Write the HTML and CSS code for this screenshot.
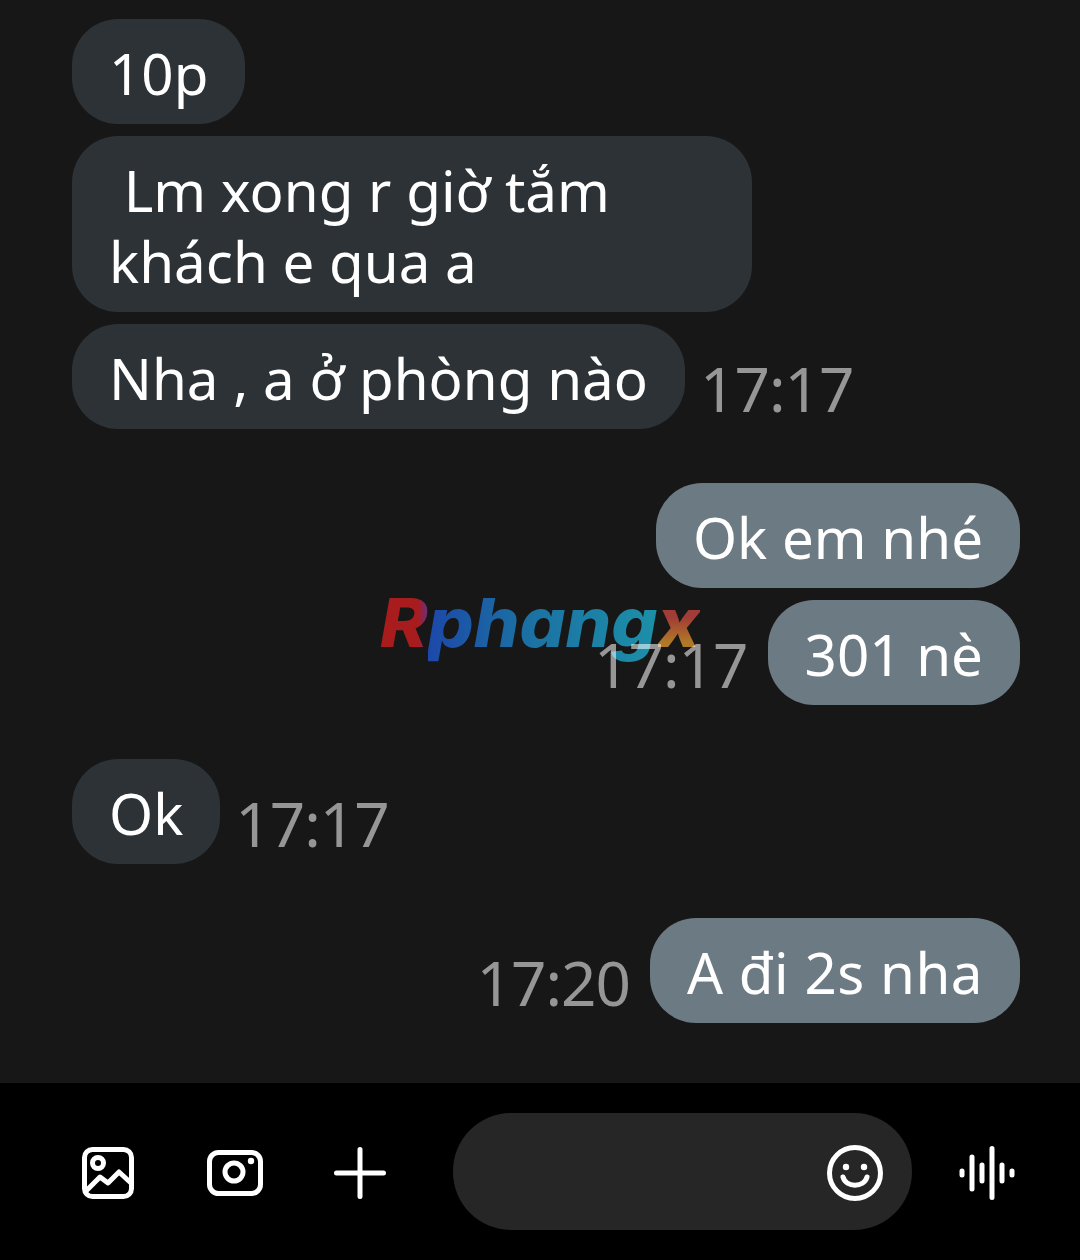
FILE: index.html
```html
<!DOCTYPE html>
<html lang="vi">
<head>
    <meta charset="UTF-8">
    <meta name="viewport" content="width=device-width, initial-scale=1.0">
    <title>Chat</title>
    <link rel="stylesheet" href="styles.css">
</head>
<body>
    <div class="thread">
        <div class="group incoming">
            <div class="row"><div class="bubble">10p</div></div>
            <div class="row"><div class="bubble wide">&nbsp;Lm xong r giờ tắm<br>khách e qua a</div></div>
            <div class="row"><div class="bubble">Nha , a ở phòng nào</div><span class="time">17:17</span></div>
        </div>

        <div class="group outgoing">
            <div class="row"><div class="bubble">Ok em nhé</div></div>
            <div class="row"><span class="time">17:17</span><div class="bubble">301 nè</div></div>
        </div>

        <div class="group incoming">
            <div class="row"><div class="bubble">Ok</div><span class="time">17:17</span></div>
        </div>

        <div class="group outgoing">
            <div class="row"><span class="time">17:20</span><div class="bubble spaced">A đi 2s nha</div></div>
        </div>
    </div>

    <div class="watermark"><span class="wm-r">R</span><span class="wm-main">phang</span><span class="wm-x">x</span></div>

    <div class="composer">
        <svg class="icon icon-image" width="56" height="56" viewBox="0 0 56 56" fill="none" stroke="#fff" stroke-width="5" stroke-linecap="round" stroke-linejoin="round">
            <rect x="4.5" y="4.5" width="47" height="47" rx="8"/>
            <circle cx="18" cy="18" r="5.5"/>
            <path d="M6 46 L20 32 L28 38 L39 27 L51 38"/>
        </svg>
        <svg class="icon icon-camera" width="56" height="46" viewBox="0 0 56 46" fill="none" stroke="#fff" stroke-width="5">
            <rect x="2.5" y="2.5" width="51" height="41" rx="9"/>
            <circle cx="27" cy="22" r="9"/>
            <circle cx="44" cy="11" r="3.2" fill="#fff" stroke="none"/>
        </svg>
        <svg class="icon icon-plus" width="52" height="52" viewBox="0 0 52 52" fill="none" stroke="#fff" stroke-width="5" stroke-linecap="round">
            <path d="M26 2.5 V49.5 M2.5 26 H49.5"/>
        </svg>
        <div class="input">
            <svg class="icon" width="56" height="56" viewBox="0 0 56 56" fill="none" stroke="#fff" stroke-width="5" stroke-linecap="round">
                <circle cx="28" cy="28" r="25.5"/>
                <circle cx="19" cy="22" r="3.2" fill="#fff" stroke="none"/>
                <circle cx="37" cy="22" r="3.2" fill="#fff" stroke="none"/>
                <path d="M16 32 C19 43 37 43 40 32"/>
            </svg>
        </div>
        <svg class="icon icon-voice" width="56" height="54" viewBox="0 0 56 54" fill="none" stroke="#fff" stroke-width="5" stroke-linecap="round">
            <path d="M3 25 V29 M13 11 V43 M23 19 V35 M33 2.5 V51.5 M43 19 V35 M53 25 V29"/>
        </svg>
    </div>
</body>
</html>
```

FILE: styles.css
```css
* {
    margin: 0;
    padding: 0;
    box-sizing: border-box;
}

body {
    width: 1080px;
    height: 1260px;
    position: relative;
    overflow: hidden;
    background: #171717;
    font-family: 'Noto Sans', Roboto, sans-serif;
    color: #fff;
    display: flex;
    flex-direction: column;
}

.thread {
    flex: 1;
    padding: 19px 60px 0 72px;
    display: flex;
    flex-direction: column;
    gap: 54px;
}

.group {
    display: flex;
    flex-direction: column;
    gap: 12px;
}

.row {
    display: flex;
    align-items: flex-end;
    gap: 15px;
}

.outgoing .row {
    justify-content: flex-end;
    gap: 20px;
}

.bubble {
    background: #2c3236;
    border-radius: 46px;
    padding: 19px 37px 15px;
    font-size: 56.5px;
    line-height: 71px;
    white-space: nowrap;
}

.outgoing .bubble {
    background: #6c7a83;
}

.wide {
    width: 680px;
    white-space: normal;
}

.spaced {
    letter-spacing: 0.5px;
}

.time {
    font-size: 62px;
    letter-spacing: -1px;
    line-height: 72px;
    color: #969696;
    margin-bottom: 5px;
}

.watermark {
    position: absolute;
    left: 380px;
    top: 582px;
    font-size: 68px;
    line-height: 80px;
    font-weight: 800;
    font-style: italic;
    font-family: Inter, 'Liberation Sans', sans-serif;
    white-space: nowrap;
    transform: scaleX(1.06);
    transform-origin: left center;
    mix-blend-mode: screen;
}

.wm-r {
    background: linear-gradient(90deg, #a00608 80%, #5a1a70);
    -webkit-background-clip: text;
    background-clip: text;
    color: transparent;
}

.wm-main {
    background: linear-gradient(90deg, #0536a0, #04609a 40%, #06859f);
    -webkit-background-clip: text;
    background-clip: text;
    color: transparent;
}

.wm-x {
    background: linear-gradient(180deg, #982a22 45%, #a86c12 75%);
    -webkit-background-clip: text;
    background-clip: text;
    color: transparent;
}

.composer {
    height: 177px;
    background: #000;
    display: flex;
    align-items: center;
}

.icon {
    flex-shrink: 0;
    display: block;
    margin-top: 3px;
}

.icon-image {
    margin-left: 80px;
}

.icon-camera {
    margin-left: 71px;
}

.icon-plus {
    margin-left: 71px;
}

.input {
    width: 459px;
    height: 117px;
    margin-left: 67px;
    border-radius: 58px;
    background: #262626;
    display: flex;
    align-items: center;
    justify-content: flex-end;
    padding-right: 29px;
}

.icon-voice {
    margin-left: 47px;
}
```
